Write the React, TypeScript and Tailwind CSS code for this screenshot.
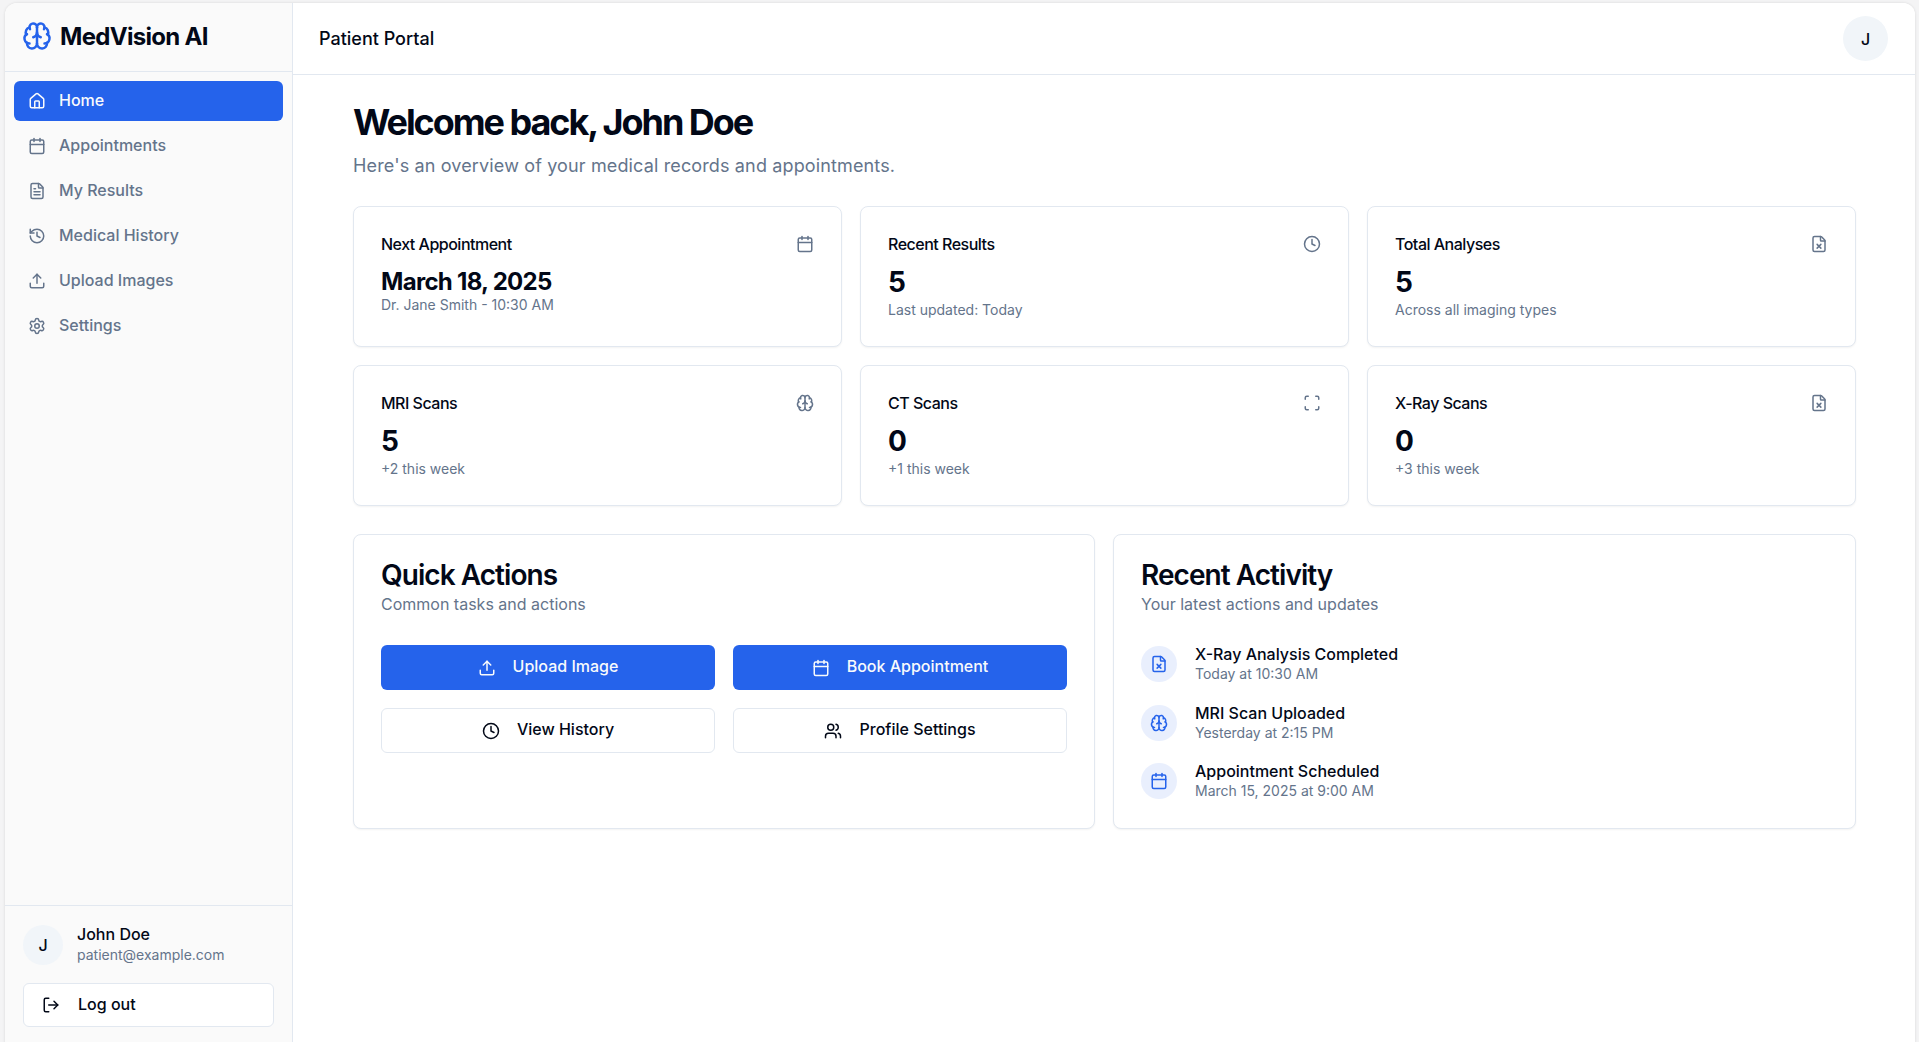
import { Brain, Calendar, Clock, FileText, FileX, History, House, LogOut, Scan, Settings, Upload, Users } from 'lucide-react';
import type { LucideIcon } from 'lucide-react';

const navItems: { label: string; icon: LucideIcon; active?: boolean }[] = [
    { label: 'Home', icon: House, active: true },
    { label: 'Appointments', icon: Calendar },
    { label: 'My Results', icon: FileText },
    { label: 'Medical History', icon: History },
    { label: 'Upload Images', icon: Upload },
    { label: 'Settings', icon: Settings },
];

const statRows: { title: string; value: string; note: string; icon: LucideIcon; date?: boolean }[][] = [
    [
        { title: 'Next Appointment', value: 'March 18, 2025', note: 'Dr. Jane Smith - 10:30 AM', icon: Calendar, date: true },
        { title: 'Recent Results', value: '5', note: 'Last updated: Today', icon: Clock },
        { title: 'Total Analyses', value: '5', note: 'Across all imaging types', icon: FileX },
    ],
    [
        { title: 'MRI Scans', value: '5', note: '+2 this week', icon: Brain },
        { title: 'CT Scans', value: '0', note: '+1 this week', icon: Scan },
        { title: 'X-Ray Scans', value: '0', note: '+3 this week', icon: FileX },
    ],
];

const activity: { title: string; time: string; icon: LucideIcon }[] = [
    { title: 'X-Ray Analysis Completed', time: 'Today at 10:30 AM', icon: FileX },
    { title: 'MRI Scan Uploaded', time: 'Yesterday at 2:15 PM', icon: Brain },
    { title: 'Appointment Scheduled', time: 'March 15, 2025 at 9:00 AM', icon: Calendar },
];

const StatCard = ({ title, value, note, icon: Icon, date }: { title: string; value: string; note: string; icon: LucideIcon; date?: boolean }) => (
    <div className="h-[140.5px] rounded-lg border border-[#e2e8f0] bg-white px-[27px] pt-[25px] shadow-[0_1px_2px_rgba(0,0,0,0.05)]">
        <div className="flex items-center justify-between">
            <p className="text-[16px] leading-[24px] font-medium tracking-[-0.5px] text-[#020817]">{title}</p>
            <Icon className="h-[18px] w-[18px] text-[#64748b]" />
        </div>
        {date ? (
            <p className="mt-[13px] text-[24px] leading-[26px] font-bold tracking-[-0.7px] text-[#020817]">{value}</p>
        ) : (
            <p className="mt-[10px] text-[28px] leading-[32px] font-bold text-[#020817]">{value}</p>
        )}
        <p className={date ? 'text-[14px] leading-[20px] text-[#64748b]' : 'mt-[2px] text-[14px] leading-[20px] text-[#64748b]'}>{note}</p>
    </div>
);

const App = () => {
    return (
        <div className="h-[1042px] overflow-hidden bg-[#f4f4f5] pt-[3px] pr-1 pl-[5px] font-['Inter',sans-serif]">
            <div className="flex h-[1050px] overflow-hidden rounded-[12px] bg-white shadow-[0_0_3px_rgba(0,0,0,0.12)]">
                <aside className="flex h-[1039px] w-[288px] shrink-0 flex-col border-r border-[#e2e8f0] bg-[#fafafa]">
                    <div className="flex h-[69px] items-center gap-2 border-b border-[#e2e8f0] pl-[17px]">
                        <Brain className="-mt-[2px] h-[30px] w-[30px] text-[#2563eb]" />
                        <span className="text-[24px] leading-[32px] font-bold tracking-[-0.7px] text-[#020817]">MedVision AI</span>
                    </div>
                    <nav className="flex flex-col gap-[5px] px-[9px] pt-[9px]">
                        {navItems.map(({ label, icon: Icon, active }) => (
                            <a
                                key={label}
                                className={
                                    active
                                        ? 'flex h-10 items-center gap-[13px] rounded-md bg-[#2563eb] pl-[14px] text-[16px] font-medium text-[#f8fafc]'
                                        : 'flex h-10 items-center gap-[13px] rounded-md pl-[14px] text-[16px] font-medium text-[#64748b]'
                                }
                            >
                                <Icon className="h-[18px] w-[18px]" />
                                <span className="-mt-[2px]">{label}</span>
                            </a>
                        ))}
                    </nav>
                    <div className="mt-auto border-t border-[#e2e8f0] px-[18px] pt-[18px] pb-[15px]">
                        <div className="flex items-center gap-[14px]">
                            <div className="flex h-10 w-10 items-center justify-center rounded-full bg-[#f1f5f9] text-[16px] font-medium text-[#020817]">J</div>
                            <div>
                                <p className="text-[16px] leading-[20px] font-medium text-[#020817]">John Doe</p>
                                <p className="mt-px text-[14px] leading-[20px] text-[#64748b]">patient@example.com</p>
                            </div>
                        </div>
                        <button className="mt-[18px] flex h-11 w-full items-center gap-[18px] rounded-md border border-[#e2e8f0] bg-white pl-[18px] text-[16px] font-medium text-[#020817]">
                            <LogOut className="h-[18px] w-[18px]" />
                            <span className="-mt-[2px]">Log out</span>
                        </button>
                    </div>
                </aside>
                <div className="min-w-0 flex-1 bg-white">
                    <header className="flex h-[72px] items-center justify-between border-b border-[#e2e8f0] pr-[27px] pl-[26px]">
                        <span className="text-[18px] font-medium text-[#020817]">Patient Portal</span>
                        <div className="flex h-[45px] w-[45px] items-center justify-center rounded-full bg-[#f1f5f9] text-[16px] font-medium text-[#020817]">J</div>
                    </header>
                    <main className="pt-[27px] pr-[59px] pl-[60px]">
                        <h1 className="text-[36px] leading-[40px] font-bold tracking-[-2.05px] text-[#020817]">Welcome back, John Doe</h1>
                        <p className="mt-[10px] text-[18px] leading-[28px] tracking-[0.14px] text-[#64748b]">Here's an overview of your medical records and appointments.</p>
                        <div className="mt-[26px] flex flex-col gap-[18.5px]">
                            {statRows.map((row) => (
                                <div key={row[0].title} className="grid grid-cols-3 gap-[18px]">
                                    {row.map((card) => (
                                        <StatCard key={card.title} {...card} />
                                    ))}
                                </div>
                            ))}
                        </div>
                        <div className="mt-[28.5px] grid grid-cols-[742px_1fr] gap-[18px]">
                            <section className="h-[295px] rounded-lg border border-[#e2e8f0] bg-white px-[27px] pt-[24px] shadow-[0_1px_2px_rgba(0,0,0,0.05)]">
                                <h2 className="text-[28px] leading-[32px] font-semibold tracking-[-0.95px] text-[#020817]">Quick Actions</h2>
                                <p className="mt-px text-[16px] leading-[24px] text-[#64748b]">Common tasks and actions</p>
                                <div className="mt-[29px] grid grid-cols-2 gap-[18px]">
                                    <button className="flex h-[45px] items-center justify-center gap-[17px] rounded-md bg-[#2563eb] text-[16px] font-medium text-[#f8fafc]">
                                        <Upload className="h-[18px] w-[18px]" />
                                        <span className="-mt-1">Upload Image</span>
                                    </button>
                                    <button className="flex h-[45px] items-center justify-center gap-[17px] rounded-md bg-[#2563eb] text-[16px] font-medium text-[#f8fafc]">
                                        <Calendar className="h-[18px] w-[18px]" />
                                        <span className="-mt-1">Book Appointment</span>
                                    </button>
                                    <button className="flex h-[45px] items-center justify-center gap-[17px] rounded-md border border-[#e2e8f0] bg-white text-[16px] font-medium text-[#020817]">
                                        <Clock className="h-[18px] w-[18px]" />
                                        <span className="-mt-1">View History</span>
                                    </button>
                                    <button className="flex h-[45px] items-center justify-center gap-[17px] rounded-md border border-[#e2e8f0] bg-white text-[16px] font-medium text-[#020817]">
                                        <Users className="h-[18px] w-[18px]" />
                                        <span className="-mt-1">Profile Settings</span>
                                    </button>
                                </div>
                            </section>
                            <section className="h-[295px] rounded-lg border border-[#e2e8f0] bg-white px-[27px] pt-[24px] shadow-[0_1px_2px_rgba(0,0,0,0.05)]">
                                <h2 className="text-[28px] leading-[32px] font-semibold tracking-[-0.95px] text-[#020817]">Recent Activity</h2>
                                <p className="mt-px text-[16px] leading-[24px] text-[#64748b]">Your latest actions and updates</p>
                                <div className="mt-[28px] flex flex-col gap-[18.5px]">
                                    {activity.map(({ title, time, icon: Icon }) => (
                                        <div key={title} className="flex items-center gap-[18px]">
                                            <div className="flex h-9 w-9 items-center justify-center rounded-full bg-[#2563eb]/10">
                                                <Icon className="h-[18px] w-[18px] text-[#2563eb]" />
                                            </div>
                                            <div>
                                                <p className="text-[16px] leading-[20px] font-medium text-[#020817]">{title}</p>
                                                <p className="text-[14px] leading-[20px] text-[#64748b]">{time}</p>
                                            </div>
                                        </div>
                                    ))}
                                </div>
                            </section>
                        </div>
                    </main>
                </div>
            </div>
        </div>
    );
};

export default App;
